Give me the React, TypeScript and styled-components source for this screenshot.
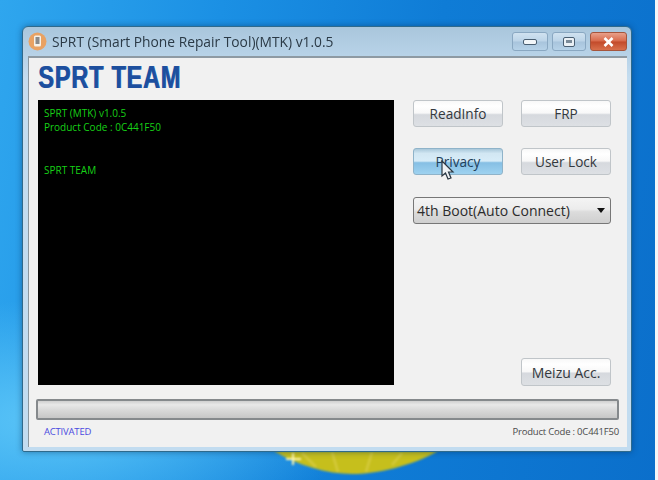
import React from "react";
import styled, { createGlobalStyle } from "styled-components";

const Global = createGlobalStyle`
  html, body { margin: 0; padding: 0; background: #1a8ee0; overflow: hidden; }
  body { font-family: "Open Sans", "Liberation Sans", sans-serif; }
`;

const Desktop = styled.div`
  position: relative;
  width: 658px;
  height: 480px;
  box-sizing: border-box;
  padding: 26px 26px 28px 22px;
  overflow: hidden;
  background:
    radial-gradient(ellipse 300px 120px at 60px 420px, #5cc6f8 0%, rgba(92,198,248,0) 100%),
    linear-gradient(100deg, #2fa6ee 0%, #1b90e4 30%, #0f7cd6 60%, #0b6fcb 100%);
  &::after {
    content: "";
    position: absolute;
    top: 0;
    right: 0;
    width: 3px;
    height: 100%;
    background: #f4f6f8;
  }
`;

const Sun = styled.svg`
  position: absolute;
  left: 272px;
  top: 445px;
  filter: blur(0.8px);
`;

const Window = styled.div`
  position: relative;
  z-index: 1;
  width: 610px;
  height: 426px;
  box-sizing: border-box;
  display: flex;
  flex-direction: column;
  padding: 0 4px 4px 5px;
  border-radius: 6px 6px 2px 2px;
  border: 1px solid #2f6a8c;
  background: linear-gradient(180deg, #a9c6dc 0%, #b8d3e8 7%, #c4dcef 12%, #c2dcf0 100%);
  filter: blur(0.55px);
  box-shadow: 0 0 6px rgba(0, 40, 80, 0.45);
`;

const TitleBar = styled.div`
  flex: none;
  height: 29px;
  display: flex;
  align-items: center;
  gap: 5px;
`;

const AppIcon = styled.svg`
  flex: none;
`;

const Title = styled.span`
  flex: 1;
  font-size: 13.8px;
  font-family: "Open Sans", sans-serif;
  color: #2b3a46;
  white-space: nowrap;
`;

const Controls = styled.div`
  flex: none;
  display: flex;
  gap: 4px;
  align-self: flex-start;
  margin-top: 5px;
`;

const Ctl = styled.div<{ $w: number; $close?: boolean }>`
  width: ${(p) => p.$w}px;
  height: 19px;
  box-sizing: border-box;
  display: flex;
  align-items: center;
  justify-content: center;
  border: 1px solid ${(p) => (p.$close ? "#a5553c" : "#8aa8c2")};
  border-radius: 3px;
  background: ${(p) =>
    p.$close
      ? "linear-gradient(180deg,#e8a08a 0%,#d8694a 48%,#c24a2a 52%,#d8704c 100%)"
      : "linear-gradient(180deg,#d0e2f0 0%,#bcd4e8 48%,#a8c4dc 52%,#b6d2e8 100%)"};
`;

const Client = styled.div`
  flex: 1;
  min-height: 0;
  display: grid;
  grid-template-columns: 356px 198px;
  grid-template-rows: 42px 285px 14px 21px auto;
  column-gap: 19px;
  padding: 0 7px 0 9px;
  border: 1px solid #8a979f;
  border-width: 1px 0 0 1px;
  border-top: 2px solid #8e9aa3;
  background: #f1f1f1;
  color: #333;
`;

const LogoRow = styled.div`
  grid-column: 1 / 3;
  display: flex;
  align-items: center;
  padding: 0 0 4px 0;
  height: 38px;
`;

const Logo = styled.div`
  font-family: "Liberation Sans", sans-serif;
  font-weight: 700;
  font-size: 31px;
  line-height: 31px;
  letter-spacing: 1px;
  color: #1d4f9e;
  white-space: nowrap;
  transform: scaleX(0.76);
  transform-origin: left center;
  text-shadow: 1px 0 0 #2a62ad;
`;

const Console = styled.div`
  background: #000;
  padding: 6px 6px;
  font-family: "Open Sans", sans-serif;
  font-size: 10px;
  line-height: 14px;
  color: #17d017;
`;

const ConsoleLine = styled.div<{ $gap?: boolean }>`
  margin-top: ${(p) => (p.$gap ? "29px" : "0")};
`;

const Side = styled.div`
  display: flex;
  flex-direction: column;
  align-items: stretch;
`;

const ButtonGrid = styled.div`
  display: grid;
  grid-template-columns: 90px 90px;
  grid-auto-rows: 27px;
  column-gap: 18px;
  row-gap: 21px;
`;

const Btn = styled.div<{ $hover?: boolean }>`
  position: relative;
  box-sizing: border-box;
  display: flex;
  align-items: center;
  justify-content: center;
  border: 1px solid ${(p) => (p.$hover ? "#8fb3c9" : "#c0c5c9")};
  border-radius: 3px;
  font-size: 13.6px;
  color: ${(p) => (p.$hover ? "#1f3f5a" : "#33383d")};
  background: ${(p) =>
    p.$hover
      ? "linear-gradient(180deg,#a9c8da 0%,#d2e7f3 18%,#d7ecf8 48%,#86bfe4 55%,#9ed2f0 100%)"
      : "linear-gradient(180deg,#f8f8f8 0%,#ffffff 20%,#f8f8f8 48%,#d6d9de 55%,#dde0e4 100%)"};
`;

const Cursor = styled.svg`
  position: absolute;
  left: 26px;
  top: 11px;
`;

const Select = styled.div`
  margin-top: 22px;
  width: 198px;
  height: 27px;
  box-sizing: border-box;
  display: flex;
  align-items: center;
  justify-content: space-between;
  padding: 0 5px 0 3px;
  border: 1px solid #777;
  border-radius: 3px;
  font-size: 14px;
  color: #2c2c2c;
  background: linear-gradient(180deg,#f4f4f4 0%,#ececec 45%,#dcdcdc 55%,#cfcfcf 100%);
`;

const Arrow = styled.div`
  width: 0;
  height: 0;
  border-left: 4.5px solid transparent;
  border-right: 4.5px solid transparent;
  border-top: 5px solid #111;
`;

const Spacer = styled.div`
  flex: 1;
`;

const SoloBtn = styled(Btn)`
  flex: none;
  align-self: flex-end;
  width: 90px;
  height: 28px;
  margin-bottom: -1px;
  font-size: 14px;
`;

const Progress = styled.div`
  grid-column: 1 / 3;
  grid-row: 4;
  margin: 0 -8px 0 -2px;
  box-sizing: border-box;
  border: 2px solid #85898c;
  border-radius: 2px;
  background: linear-gradient(180deg,#d0d0d0 0%,#e8e8e8 22%,#d8d8d8 55%,#c6c6c6 100%);
`;

const Status = styled.div`
  grid-column: 1 / 3;
  grid-row: 5;
  display: flex;
  justify-content: space-between;
  align-items: flex-start;
  margin-right: -8px;
  padding: 5px 0 0 6px;
  font-size: 9.5px;
  line-height: 13px;
  letter-spacing: -0.2px;
`;

const Activated = styled.span`
  color: #4a4ae0;
`;

const Code = styled.span`
  color: #4a4a4a;
`;

export default function App() {
  return (
    <Desktop>
      <Global />
      <Sun width="170" height="32" viewBox="0 0 170 32">
        <path d="M2 6 H166 C140 21 105 29 80 29 C55 29 25 20 2 6Z" fill="#c6bf1c" />
        <path d="M30 8 L44 22 M60 7 L66 27 M100 7 L94 27 M130 8 L120 20" stroke="#d4ca3c" strokeWidth="2.5" />
        <path d="M21 8 V20 M14 14 H29" stroke="#fff7b0" strokeWidth="2" />
      </Sun>
      <Window>
        <TitleBar>
          <AppIcon width="19" height="19" viewBox="0 0 19 19">
            <circle cx="9.5" cy="9.5" r="9" fill="#e9a263" />
            <rect x="6" y="3.5" width="7" height="11" rx="1.5" fill="#f6f2ea" />
            <rect x="7.5" y="5" width="4" height="7" fill="#8a8a8a" />
          </AppIcon>
          <Title>SPRT (Smart Phone Repair Tool)(MTK) v1.0.5</Title>
          <Controls>
            <Ctl $w={36}>
              <svg width="14" height="6" viewBox="0 0 14 6"><rect x="0.5" y="0.5" width="13" height="5" rx="1.5" fill="#f2f6f9" stroke="#4a5f72" /></svg>
            </Ctl>
            <Ctl $w={34}>
              <svg width="12" height="10" viewBox="0 0 12 10"><rect x="0.5" y="0.5" width="11" height="9" rx="1.5" fill="#eaf0f5" stroke="#4a5f72" /><rect x="3" y="3" width="6" height="3" fill="#7a8a98" /></svg>
            </Ctl>
            <Ctl $w={37} $close>
              <svg width="11" height="10" viewBox="0 0 11 10"><path d="M1.5 1 L9.5 9 M9.5 1 L1.5 9" stroke="#fff" strokeWidth="2.6" /></svg>
            </Ctl>
          </Controls>
        </TitleBar>
        <Client>
          <LogoRow>
            <Logo>SPRT TEAM</Logo>
          </LogoRow>
          <Console>
            <ConsoleLine>SPRT (MTK) v1.0.5</ConsoleLine>
            <ConsoleLine>Product Code : 0C441F50</ConsoleLine>
            <ConsoleLine $gap>SPRT TEAM</ConsoleLine>
          </Console>
          <Side>
            <ButtonGrid>
              <Btn>ReadInfo</Btn>
              <Btn>FRP</Btn>
              <Btn $hover>
                Privacy
                <Cursor width="16" height="22" viewBox="0 0 16 22">
                  <path d="M2 1 L2 16 L5.5 13 L8 19 L11 18 L8.5 12 L13 12 Z" fill="#eef2f5" stroke="#2b3640" strokeWidth="1.2" />
                </Cursor>
              </Btn>
              <Btn>User Lock</Btn>
            </ButtonGrid>
            <Select>
              4th Boot(Auto Connect)
              <Arrow />
            </Select>
            <Spacer />
            <SoloBtn>Meizu Acc.</SoloBtn>
          </Side>
          <Progress />
          <Status>
            <Activated>ACTIVATED</Activated>
            <Code>Product Code : 0C441F50</Code>
          </Status>
        </Client>
      </Window>
    </Desktop>
  );
}
